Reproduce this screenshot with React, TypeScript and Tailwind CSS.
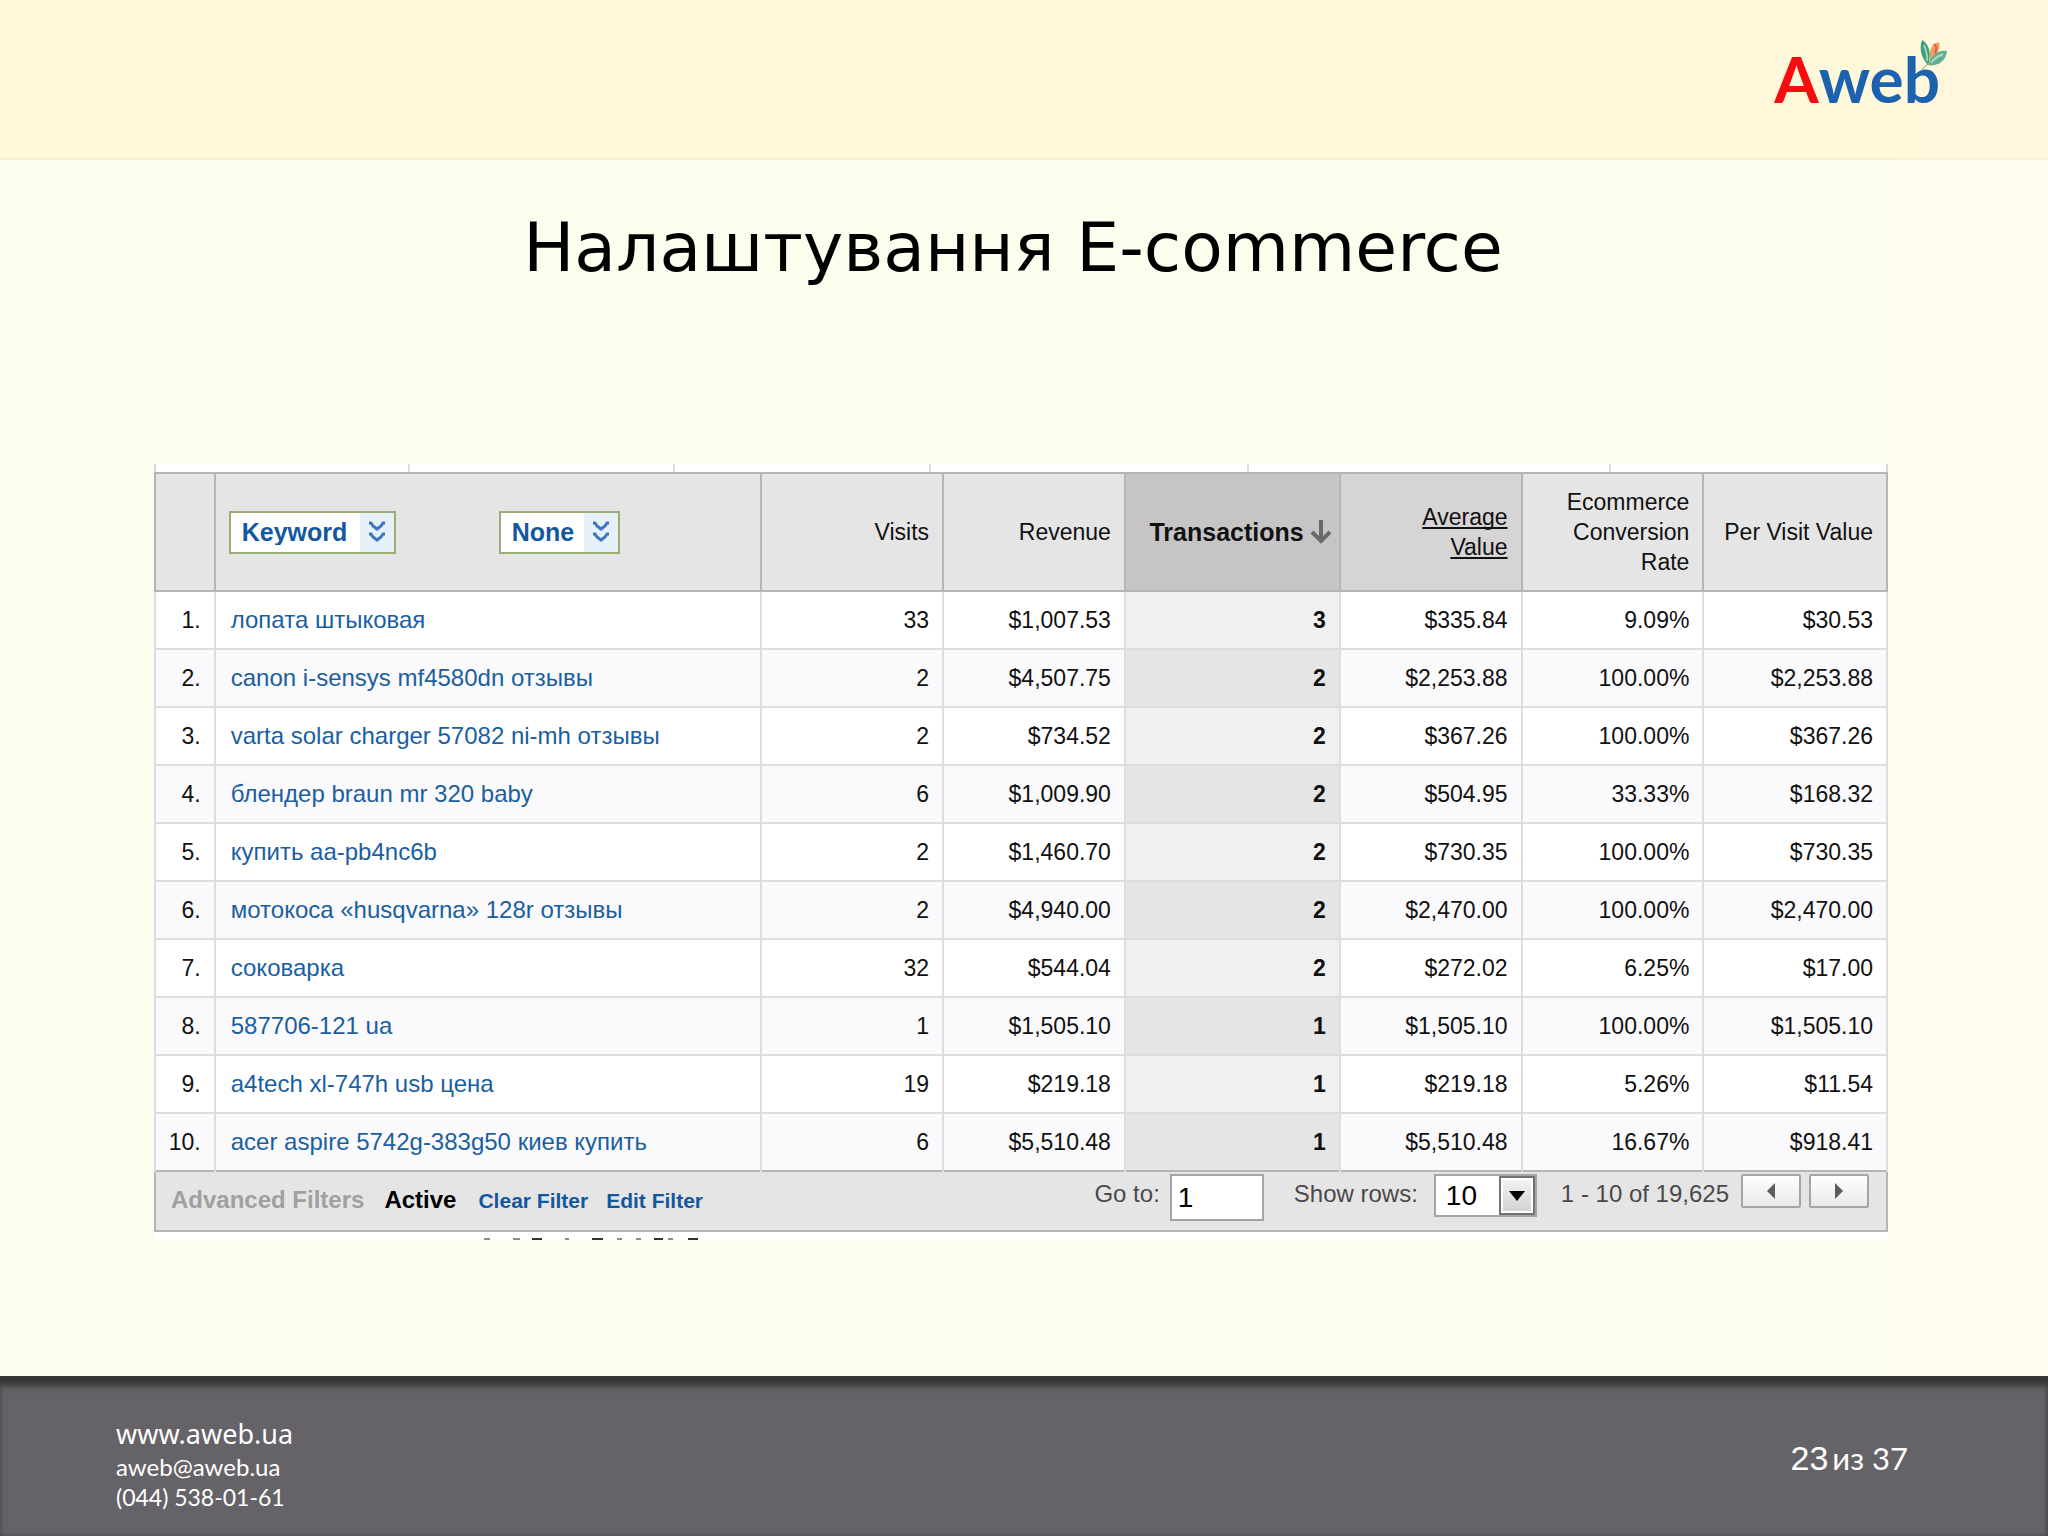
import { ReactNode } from "react";

type Row = {
  keyword: string;
  visits: string;
  revenue: string;
  transactions: string;
  average: string;
  rate: string;
  perVisit: string;
};

const rows: Row[] = [
  { keyword: "лопата штыковая", visits: "33", revenue: "$1,007.53", transactions: "3", average: "$335.84", rate: "9.09%", perVisit: "$30.53" },
  { keyword: "canon i-sensys mf4580dn отзывы", visits: "2", revenue: "$4,507.75", transactions: "2", average: "$2,253.88", rate: "100.00%", perVisit: "$2,253.88" },
  { keyword: "varta solar charger 57082 ni-mh отзывы", visits: "2", revenue: "$734.52", transactions: "2", average: "$367.26", rate: "100.00%", perVisit: "$367.26" },
  { keyword: "блендер braun mr 320 baby", visits: "6", revenue: "$1,009.90", transactions: "2", average: "$504.95", rate: "33.33%", perVisit: "$168.32" },
  { keyword: "купить aa-pb4nc6b", visits: "2", revenue: "$1,460.70", transactions: "2", average: "$730.35", rate: "100.00%", perVisit: "$730.35" },
  { keyword: "мотокоса «husqvarna» 128r отзывы", visits: "2", revenue: "$4,940.00", transactions: "2", average: "$2,470.00", rate: "100.00%", perVisit: "$2,470.00" },
  { keyword: "соковарка", visits: "32", revenue: "$544.04", transactions: "2", average: "$272.02", rate: "6.25%", perVisit: "$17.00" },
  { keyword: "587706-121 ua", visits: "1", revenue: "$1,505.10", transactions: "1", average: "$1,505.10", rate: "100.00%", perVisit: "$1,505.10" },
  { keyword: "a4tech xl-747h usb цена", visits: "19", revenue: "$219.18", transactions: "1", average: "$219.18", rate: "5.26%", perVisit: "$11.54" },
  { keyword: "acer aspire 5742g-383g50 киев купить", visits: "6", revenue: "$5,510.48", transactions: "1", average: "$5,510.48", rate: "16.67%", perVisit: "$918.41" },
];

const Logo = () => (
  <a href="#" className="relative flex items-baseline font-['Lato',sans-serif] text-[64px] leading-[66px] font-bold">
    <span className="text-[#fb0a10]">A</span>
    <span className="text-[#1c62ae]">web</span>
    <svg viewBox="0 0 28 30" className="absolute -top-1.5 -right-2 h-[30px] w-7" aria-hidden="true">
      <path d="M10 13 C10 6 15 3 19 2 C21 7 18 14 10 25Z" fill="#f0a25c" />
      <path d="M14 4 C17 6 17 9 15 13" fill="none" stroke="#e2574c" strokeWidth="2" />
      <path d="M2 0 C9 4 12 14 8 25 C1 18 -1 8 2 0Z" fill="#3f9c86" />
      <path d="M4 5 C6 10 8 16 7 21" fill="none" stroke="#a6d6a2" strokeWidth="2" />
      <path d="M27 11 C18 10 11 15 8 25 C17 27 26 21 27 11Z" fill="#5fae93" />
      <path d="M23 14 C18 16 14 19 11 23" fill="none" stroke="#b4dcb8" strokeWidth="2" />
      <path d="M8 24 L2 29" stroke="#8a9a6a" strokeWidth="1" />
    </svg>
  </a>
);

const MenuSelect = ({ label, value, className }: { label: string; value: string; className: string }) => (
  <div className={`relative h-[43px] border-2 border-[#9caf73] bg-white ${className}`}>
    <select
      aria-label={label}
      defaultValue={value}
      className="h-full w-full appearance-none bg-transparent pl-[11px] text-[25px] leading-none font-bold text-[#13589e]"
    >
      <option>{value}</option>
    </select>
    <span className="pointer-events-none absolute inset-y-0 right-0 flex w-[34px] items-center justify-center bg-[#e6f0fa]">
      <svg viewBox="0 0 18 22" className="h-[22px] w-[18px]" fill="none" stroke="#3d77c2" strokeWidth="3" aria-hidden="true">
        <path d="M1 2h2l2 3 4 3 4-3 2-3h2M1 13h2l2 3 4 3 4-3 2-3h2" />
      </svg>
    </span>
  </div>
);

const HeadCell = ({ children, className = "bg-[#e6e5e6]" }: { children?: ReactNode; className?: string }) => (
  <th className={`border-2 border-[#b6b4b5] px-[13px] text-right leading-[30px] font-normal ${className}`}>
    {children}
  </th>
);

const Cell = ({ children, className = "" }: { children: ReactNode; className?: string }) => (
  <td className={`border-x-2 border-[#dddcde] pr-[13px] text-right ${className}`}>{children}</td>
);

const PageButton = ({ label, points }: { label: string; points: string }) => (
  <button
    aria-label={label}
    className="flex h-[34px] w-[60px] items-center justify-center rounded-xs border-2 border-[#a5a4a6] bg-linear-to-b from-white to-[#e9e8ea]"
  >
    <svg viewBox="0 0 10 16" className="h-4 w-[10px]" aria-hidden="true">
      <polygon points={points} fill="#5c5b5d" />
    </svg>
  </button>
);

const App = () => {
  return (
    <div className="flex min-h-screen flex-col bg-linear-to-r from-[#fcfdec] from-92% to-[#fffbee] to-94%">
      <header className="flex h-40 items-start justify-end border-b-2 border-[#f8f0d4] bg-linear-to-r from-[#fff8da] from-92% to-[#fff6dc] to-96% pt-[46px] pr-[108px]">
        <Logo />
      </header>

      <main className="flex flex-1 flex-col pr-[160px] pl-[154px]">
        <h1 className="pt-12 pr-4 text-center font-['DejaVu_Sans',sans-serif] text-[68px] leading-20 text-black">
          Налаштування E-commerce
        </h1>

        <section className="mt-44 bg-white font-['Liberation_Sans',sans-serif] text-[23px] text-[#111]">
          {/* cut-off edge of the row above the table */}
          <div className="flex h-2 border-x-2 border-[#d8d7d9]">
            <span className="w-[14.7%] border-r-2 border-[#dddcde]" />
            <span className="w-[15.3%] border-r-2 border-[#dddcde]" />
            <span className="w-[14.8%] border-r-2 border-[#dddcde]" />
            <span className="w-[18.4%] border-r-2 border-[#dddcde]" />
            <span className="w-[20.9%] border-r-2 border-[#dddcde]" />
          </div>

          <table className="w-full table-fixed border-collapse">
            <colgroup>
              <col className="w-[3.45%]" />
              <col className="w-[31.55%]" />
              <col className="w-[10.5%]" />
              <col className="w-[10.5%]" />
              <col className="w-[12.4%]" />
              <col className="w-[10.5%]" />
              <col className="w-[10.5%]" />
              <col className="w-[10.6%]" />
            </colgroup>
            <thead>
              <tr className="h-[118px]">
                <HeadCell />
                <HeadCell>
                  <div className="flex items-center gap-[103px]">
                    <MenuSelect label="Dimension" value="Keyword" className="w-[167px]" />
                    <MenuSelect label="Second dimension" value="None" className="w-[121px]" />
                  </div>
                </HeadCell>
                <HeadCell>Visits</HeadCell>
                <HeadCell>Revenue</HeadCell>
                <HeadCell className="bg-[#c6c4c5]">
                  <span className="-mr-1.5 flex items-center justify-end gap-1.5 text-[25px] font-bold">
                    Transactions
                    <svg viewBox="0 0 22 24" className="h-6 w-[22px]" fill="none" stroke="#69686a" strokeWidth="4" aria-hidden="true">
                      <path d="M11 0v21M2 12l9 9 9-9" />
                    </svg>
                  </span>
                </HeadCell>
                <HeadCell className="bg-[#d6d4d5]">
                  <span className="underline decoration-2 underline-offset-2 [text-decoration-skip-ink:none]">
                    Average
                    <br />
                    Value
                  </span>
                </HeadCell>
                <HeadCell>Ecommerce Conversion Rate</HeadCell>
                <HeadCell className="bg-[#e6e5e6] whitespace-nowrap">Per Visit Value</HeadCell>
              </tr>
            </thead>
            <tbody>
              {rows.map((row, i) => (
                <tr key={row.keyword} className="h-[58px] border-b-2 border-[#dddcde] last:border-[#b6b4b5] even:bg-[#faf9fb]">
                  <Cell>{i + 1}.</Cell>
                  <td className="border-x-2 border-[#dddcde] pl-[15px] text-2xl whitespace-nowrap">
                    <a href="#" className="text-[#1a5f9f]">{row.keyword}</a>
                  </td>
                  <Cell>{row.visits}</Cell>
                  <Cell>{row.revenue}</Cell>
                  <Cell className={i % 2 ? "bg-[#e5e4e6] font-bold" : "bg-[#f0eff1] font-bold"}>{row.transactions}</Cell>
                  <Cell>{row.average}</Cell>
                  <Cell>{row.rate}</Cell>
                  <Cell>{row.perVisit}</Cell>
                </tr>
              ))}
            </tbody>
          </table>

          <div className="flex h-[60px] items-start justify-between border-2 border-t-0 border-[#b6b4b5] bg-[#e6e5e6] pr-[17px] pl-[15px]">
            <div className="flex items-baseline pt-3 text-2xl leading-8 font-bold">
              <span className="text-[#a09fa1]">Advanced Filters</span>
              <span className="ml-5 text-black">Active</span>
              <a href="#" className="ml-[22px] text-[21px] text-[#13589e]">Clear Filter</a>
              <a href="#" className="ml-[18px] text-[21px] text-[#13589e]">Edit Filter</a>
            </div>

            <div className="flex items-start pt-0.5 text-2xl text-[#4a494b]">
              <label htmlFor="goto" className="pt-0.5 leading-9">Go to:</label>
              <input
                id="goto"
                defaultValue="1"
                className="ml-2.5 h-[47px] w-[94px] border-2 border-[#a5a4a6] bg-white pl-1.5 text-[28px] text-black"
              />
              <label htmlFor="rows" className="ml-[30px] pt-0.5 leading-9">Show rows:</label>
              <div className="relative ml-4 h-[43px] w-[103px] border-2 border-[#a5a4a6] bg-white">
                <select
                  id="rows"
                  defaultValue="10"
                  className="h-full w-full appearance-none bg-transparent pl-2.5 text-[28px] leading-none text-black"
                >
                  <option>10</option>
                </select>
                <span className="pointer-events-none absolute inset-y-0 right-0 flex w-9 items-center justify-center border-2 border-[#727173] bg-linear-to-b from-[#f4f3f5] to-[#d2d1d3] outline-2 -outline-offset-4 outline-white">
                  <svg viewBox="0 0 16 10" className="h-[10px] w-4" aria-hidden="true">
                    <polygon points="0,0 16,0 8,10" fill="#000" />
                  </svg>
                </span>
              </div>
              <span className="ml-6 pt-0.5 leading-9">1 - 10 of 19,625</span>
              <div className="ml-3 flex gap-2">
                <PageButton label="Previous page" points="9,0 9,16 1,8" />
                <PageButton label="Next page" points="1,0 1,16 9,8" />
              </div>
            </div>
          </div>

          {/* tips of the line that runs on under the panel */}
          <svg viewBox="0 0 216 2" className="mt-1.5 ml-[330px] block h-0.5 w-[216px]" aria-hidden="true">
            <path d="M0 1h6M29 1h7M81 1h4M133 1h5M152 1h5M184 1h5" stroke="#8b8b88" strokeWidth="2" />
            <path d="M48 1h10M108 1h11M170 1h9M204 1h10" stroke="#33332f" strokeWidth="2" />
          </svg>
        </section>
      </main>

      <footer className="flex h-40 items-start justify-between bg-[#656367] pt-10 pr-[140px] pl-[116px] font-['Lato','Noto_Sans',sans-serif] text-white shadow-[inset_0_12px_6px_-2px_#383637,inset_-1px_0_4px_#4a484b]">
        <address className="flex flex-col text-2xl leading-[30px] not-italic">
          <a href="#" className="font-['Noto_Sans',sans-serif] text-[27px] leading-9">www.aweb.ua</a>
          <a href="#">aweb@aweb.ua</a>
          <span className="text-[23px]">(044) 538-01-61</span>
        </address>
        <p className="pt-[22px] text-[31px] leading-10">
          <span className="font-['Liberation_Sans',sans-serif] text-[34px]">23</span>
          <span className="ml-1">из 37</span>
        </p>
      </footer>
    </div>
  );
};

export default App;
